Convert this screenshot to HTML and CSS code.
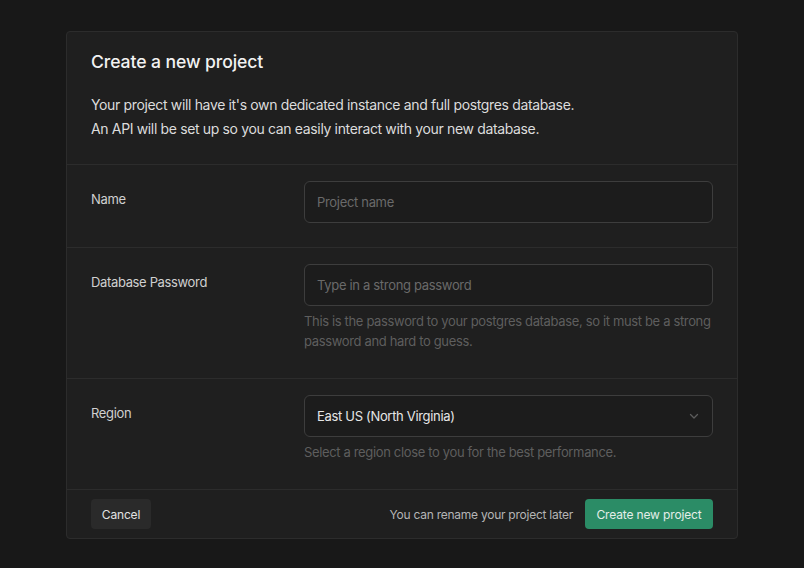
FILE: index.html
```html
<!DOCTYPE html>
<html>
<head>
<meta charset="utf-8">
<link rel="stylesheet" href="styles.css">
</head>
<body>
<div class="page">
  <div class="card">
    <div class="header">
      <h1 class="title">Create a new project</h1>
      <p class="desc">Your project will have it's own dedicated instance and full postgres database.<br>An API will be set up so you can easily interact with your new database.</p>
    </div>
    <div class="row">
      <label class="label">Name</label>
      <div class="field">
        <div class="input placeholder">Project name</div>
      </div>
    </div>
    <div class="row row-help">
      <label class="label">Database Password</label>
      <div class="field">
        <div class="input placeholder">Type in a strong password</div>
        <p class="help">This is the password to your postgres database, so it must be a strong password and hard to guess.</p>
      </div>
    </div>
    <div class="row row-help">
      <label class="label">Region</label>
      <div class="field">
        <div class="input select">
          <span>East US (North Virginia)</span>
          <svg class="chev" width="12" height="12" viewBox="0 0 12 12"><path d="M2.5 4.5 L6 8 L9.5 4.5" fill="none" stroke="#5c5c5c" stroke-width="1.3" stroke-linecap="round" stroke-linejoin="round"/></svg>
        </div>
        <p class="help">Select a region close to you for the best performance.</p>
      </div>
    </div>
    <div class="footer">
      <button class="btn btn-cancel">Cancel</button>
      <div class="footer-right">
        <span class="note">You can rename your project later</span>
        <button class="btn btn-primary">Create new project</button>
      </div>
    </div>
  </div>
</div>
</body>
</html>
```
FILE: styles.css
```css
* { box-sizing: border-box; }
html, body { margin: 0; padding: 0; }
body {
  background: #181818;
  font-family: "Inter", "Noto Sans", sans-serif;
  color: #ededed;
  width: 804px;
  height: 568px;
  overflow: hidden;
}
.page {
  padding: 31px 66px 0 66px;
}
.card {
  background: #1f1f1f;
  border: 1px solid #2c2c2c;
  border-radius: 4px;
}
.header {
  padding: 16px 24px 23px 24px;
  border-bottom: 1px solid #2c2c2c;
}
.title {
  margin: 0;
  font-size: 17.6px;
  line-height: 28px;
  font-weight: 500;
  color: #f2f2f2;
  letter-spacing: -0.1px;
}
.desc {
  margin: 17px 0 0 0;
  font-size: 14px;
  line-height: 24px;
  color: #dcdcdc;
  letter-spacing: -0.35px;
}
.row {
  display: flex;
  padding: 16px 24px 24px 24px;
  border-bottom: 1px solid #2c2c2c;
}
.label {
  width: 213px;
  flex: none;
  font-size: 13px;
  line-height: 20px;
  margin-top: 8px;
  color: #d0d0d0;
  letter-spacing: -0.35px;
}
.field {
  flex: 1;
}
.input {
  height: 42px;
  border: 1px solid #3d3d3d;
  border-radius: 6px;
  background: #1c1c1c;
  padding: 0 13px 0 12px;
  display: flex;
  align-items: center;
  font-size: 13px;
  letter-spacing: -0.32px;
}
.placeholder { color: #6a6a6a; }
.select {
  justify-content: space-between;
  color: #e6e6e6;
}
.chev { margin-right: -1px; }
.help {
  margin: 5px 0 3px 0;
  font-size: 13px;
  line-height: 20px;
  color: #5e5e5e;
  letter-spacing: -0.35px;
}
.footer {
  display: flex;
  justify-content: space-between;
  align-items: center;
  padding: 9px 24px;
}
.footer-right {
  display: flex;
  align-items: center;
  gap: 12px;
}
.note {
  font-size: 12px;
  color: #b5b5b5;
  letter-spacing: -0.25px;
}
.btn {
  height: 30px;
  border: none;
  border-radius: 4px;
  font-family: inherit;
  font-size: 12px;
  padding: 0;
  cursor: pointer;
  letter-spacing: -0.15px;
}
.btn-cancel {
  background: #2a2a2a;
  color: #e2e2e2;
  width: 60px;
}
.btn-primary {
  background: #2b8c66;
  color: #e4eee9;
  width: 128px;
}
```
